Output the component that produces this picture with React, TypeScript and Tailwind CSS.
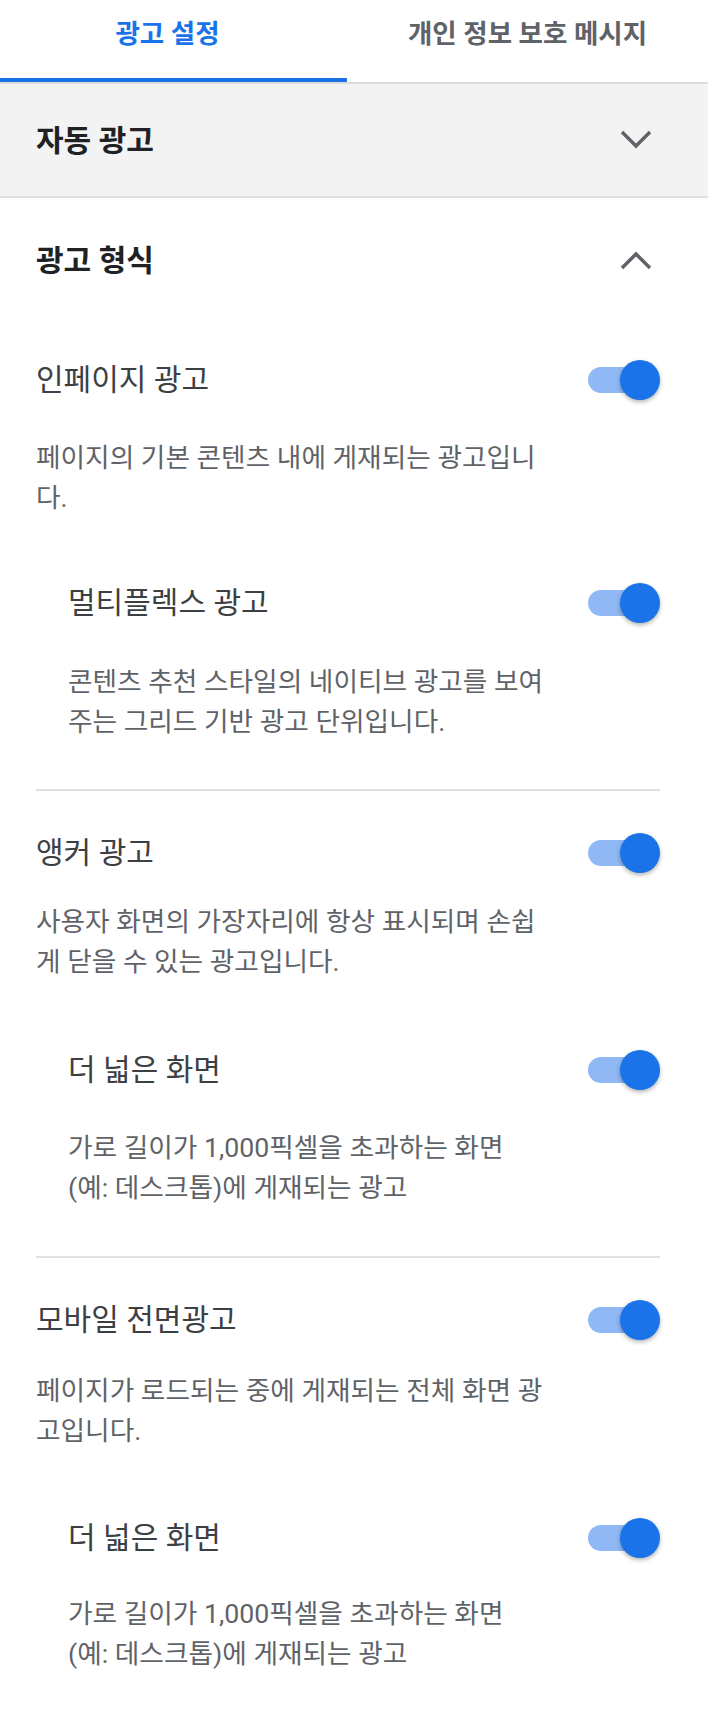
import React from "react";

const FONT = { fontFamily: 'Roboto, "Noto Sans CJK KR", sans-serif' };

function Toggle() {
  return (
    <div className="relative h-[40px] w-[72px] shrink-0">
      <div className="absolute left-0 top-[7px] h-[26px] w-[62px] rounded-full bg-[#8fb8f5]" />
      <div className="absolute right-0 top-0 h-[40px] w-[40px] rounded-full bg-[#1a73e8] shadow-[0_2px_4px_rgba(0,0,0,0.3)]" />
    </div>
  );
}

function Chevron({ up }: { up?: boolean }) {
  return (
    <svg width="32" height="20" viewBox="0 0 32 20" className="shrink-0">
      <polyline
        points={up ? "2,18 16,4 30,18" : "2,2 16,16 30,2"}
        fill="none"
        stroke="#5f6368"
        strokeWidth="3.5"
      />
    </svg>
  );
}

function Item({
  title,
  lines,
  sub,
  mt,
  descMt,
}: {
  title: string;
  lines: string[];
  sub?: boolean;
  mt: string;
  descMt: string;
}) {
  return (
    <div className={`${mt} ${sub ? "pl-[32px]" : ""}`}>
      <div className="flex h-[40px] items-center justify-between">
        <span className="text-[30px] leading-[40px] text-[#3c4043]">{title}</span>
        <Toggle />
      </div>
      <div className={`${descMt} text-[26.7px] leading-[40px] text-[#5f6368]`}>
        {lines.map((l, i) => (
          <div key={i} className="whitespace-nowrap">
            {l}
          </div>
        ))}
      </div>
    </div>
  );
}

export default function App() {
  return (
    <div style={FONT} className="w-[708px] bg-white">
      {/* Tabs */}
      <div className="flex h-[84px] border-b-2 border-[#dcdcdc]">
        <div className="flex h-[82px] w-[347px] justify-center border-b-4 border-[#1a73e8] pr-[12px] pt-[16px]">
          <span className="text-[26.5px] font-semibold leading-[36px] text-[#1a73e8]">광고 설정</span>
        </div>
        <div className="flex h-[82px] flex-1 justify-center pt-[16px]">
          <span className="text-[26.5px] font-semibold leading-[36px] text-[#5f6368]">개인 정보 보호 메시지</span>
        </div>
      </div>

      {/* Auto ads header */}
      <div className="flex h-[114px] items-center justify-between border-b-2 border-[#e0e0e0] bg-[#f3f3f3] pl-[36px] pr-[56px]">
        <span className="text-[30px] font-semibold text-[#202124]">자동 광고</span>
        <Chevron />
      </div>

      {/* Ad formats header */}
      <div className="flex h-[124px] items-center justify-between pl-[36px] pr-[56px]">
        <span className="text-[30px] font-semibold text-[#202124]">광고 형식</span>
        <Chevron up />
      </div>

      <div className="pb-[36px] pl-[36px] pr-[48px]">
        <Item
          mt="mt-[38px]"
          descMt="mt-[38px]"
          title="인페이지 광고"
          lines={["페이지의 기본 콘텐츠 내에 게재되는 광고입니", "다."]}
        />
        <Item
          sub
          mt="mt-[65px]"
          descMt="mt-[39px]"
          title="멀티플렉스 광고"
          lines={["콘텐츠 추천 스타일의 네이티브 광고를 보여", "주는 그리드 기반 광고 단위입니다."]}
        />
        <div className="mt-[47px] h-[2px] bg-[#e0e0e0]" />
        <Item
          mt="mt-[42px]"
          descMt="mt-[29px]"
          title="앵커 광고"
          lines={["사용자 화면의 가장자리에 항상 표시되며 손쉽", "게 닫을 수 있는 광고입니다."]}
        />
        <Item
          sub
          mt="mt-[68px]"
          descMt="mt-[38px]"
          title="더 넓은 화면"
          lines={["가로 길이가 1,000픽셀을 초과하는 화면", "(예: 데스크톱)에 게재되는 광고"]}
        />
        <div className="mt-[48px] h-[2px] bg-[#e0e0e0]" />
        <Item
          mt="mt-[42px]"
          descMt="mt-[31px]"
          title="모바일 전면광고"
          lines={["페이지가 로드되는 중에 게재되는 전체 화면 광", "고입니다."]}
        />
        <Item
          sub
          mt="mt-[67px]"
          descMt="mt-[36px]"
          title="더 넓은 화면"
          lines={["가로 길이가 1,000픽셀을 초과하는 화면", "(예: 데스크톱)에 게재되는 광고"]}
        />
      </div>
    </div>
  );
}
